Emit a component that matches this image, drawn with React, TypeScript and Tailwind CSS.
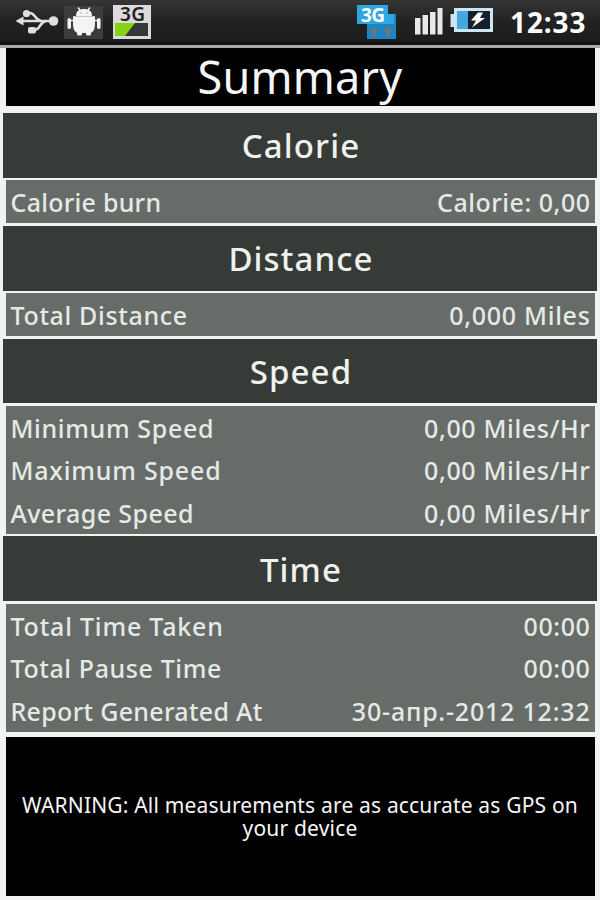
import type { ReactNode } from "react";

type Row = { label: string; value: string; labelClass: string; valueClass: string };
type Section = { title: string; rows: Row[] };

const sections: Section[] = [
  {
    title: "Calorie",
    rows: [
      { label: "Calorie burn", value: "Calorie: 0,00", labelClass: "tracking-[0.25px]", valueClass: "tracking-[0.5px]" },
    ],
  },
  {
    title: "Distance",
    rows: [
      { label: "Total Distance", value: "0,000 Miles", labelClass: "tracking-[0.65px]", valueClass: "tracking-[0.7px]" },
    ],
  },
  {
    title: "Speed",
    rows: [
      { label: "Minimum Speed", value: "0,00 Miles/Hr", labelClass: "tracking-[0.65px]", valueClass: "tracking-[0.65px]" },
      { label: "Maximum Speed", value: "0,00 Miles/Hr", labelClass: "tracking-[0.8px]", valueClass: "tracking-[0.65px]" },
      { label: "Average Speed", value: "0,00 Miles/Hr", labelClass: "tracking-[0.4px]", valueClass: "tracking-[0.65px]" },
    ],
  },
  {
    title: "Time",
    rows: [
      { label: "Total Time Taken", value: "00:00", labelClass: "tracking-[0.8px]", valueClass: "tracking-[0.6px]" },
      { label: "Total Pause Time", value: "00:00", labelClass: "tracking-[0.6px]", valueClass: "tracking-[0.6px]" },
      { label: "Report Generated At", value: "30-апр.-2012 12:32", labelClass: "tracking-[0.3px]", valueClass: "tracking-[0.8px]" },
    ],
  },
];

function StatusIcons() {
  return (
    <svg width="160" height="42" viewBox="0 0 160 42">
      {/* usb */}
      <g fill="none" stroke="#dedede" strokeWidth="2.6">
        <path d="M20 21H54" />
        <path d="M26 13H30C35 13 35 20 41 21" />
        <path d="M32 30C41 31 39 22 46 21" />
      </g>
      <g fill="#dedede">
        <path d="M15.500 21l8-4.500v9z" />
        <circle cx="26.500" cy="13.500" r="3.600" />
        <circle cx="53.500" cy="21" r="4.800" />
        <rect x="28" y="27" width="8" height="6.500" rx="2" />
      </g>
      {/* android */}
      <rect x="64" y="6" width="39" height="33" fill="#3c3c3c" />
      <g fill="#f4f4f4">
        <path d="M76 16c0-5 3-7 8-7s8 2 8 7z" />
        <path d="M73 17h22v5c0 7-1 10-5 11h-12c-4-1-5-4-5-11z" />
        <rect x="67.500" y="18" width="3.500" height="11" rx="1.700" />
        <rect x="97" y="18" width="3.500" height="11" rx="1.700" />
        <rect x="77" y="29" width="5" height="6.500" rx="1.500" />
        <rect x="86" y="29" width="5" height="6.500" rx="1.500" />
      </g>
      <path d="M78 7.500l3 4M90 7.500l-3 4M68 20.500h32" stroke="#f4f4f4" strokeWidth="1.500" />
      <path d="M73 16.500h22" stroke="#c5c5c5" />
      <path d="M80 13h1.500M86.500 13H88" stroke="#bbb" strokeWidth="1.500" />
      {/* 3G monitor */}
      <rect x="113" y="5" width="38" height="34" fill="#dcdade" />
      <rect x="115" y="23" width="33" height="13" fill="#34383a" />
      <path d="M115 23h20l-10 13h-10z" fill="#86d411" />
      <text x="120" y="21" fontSize="19" fontWeight="600" fill="#222" fontFamily="Noto Sans, sans-serif" textLength="25">
        3G
      </text>
    </svg>
  );
}

function SystemIcons() {
  return (
    <svg width="140" height="42" viewBox="355 0 140 42">
      {/* 3G data */}
      <path d="M367 14h29v25h-29z" fill="#1c84c4" />
      <path d="M357 5h31v9h6v10h-37z" fill="#2fa6e0" />
      <text x="361" y="22" fontSize="19" fontWeight="700" fill="#fff" fontFamily="Noto Sans, sans-serif" textLength="24">
        3G
      </text>
      <path d="M369 32l5-6 5 6h-3v5h-4v-5zM383 32l5-6 5 6h-3v5h-4v-5z" fill="#65777f" />
      {/* signal */}
      <g fill="#e8e8e8">
        <rect x="415" y="18" width="5.500" height="16.500" />
        <rect x="422.500" y="15" width="5.500" height="19.500" />
        <rect x="430" y="12" width="5.500" height="22.500" />
        <rect x="437.500" y="8" width="5" height="26.500" />
      </g>
      {/* battery */}
      <path d="M454 8h39v24h-39v-5h-3.500V14h3.500z" fill="#cfe6f2" />
      <rect x="457" y="11" width="11" height="18" fill="#43a9dc" />
      <rect x="468" y="11" width="22" height="18" fill="#14212c" />
      <path d="M478 12.500l-7 8h5l-4 7 13-9.500h-5l3-5.500z" fill="#fff" />
    </svg>
  );
}

function Box({ className, children }: { className: string; children: ReactNode }) {
  return <div className={`mx-[5.5px] flex justify-center bg-black text-[#f6f6f6] ${className}`}>{children}</div>;
}

export default function App() {
  return (
    <div className="h-[900px] w-[600px] overflow-hidden bg-[#f1f3f1] font-['Noto_Sans',sans-serif]">
      <div className="flex h-[45px] items-start border-b-[3px] border-[#121212] bg-linear-to-b from-[#353535] via-[#222222] to-[#1c1c1c]">
        <StatusIcons />
        <div className="ml-auto flex pr-3">
          <SystemIcons />
          <span className="ml-[15px] w-[78px] text-[28px] leading-[44px] font-bold tracking-[0.9px] whitespace-nowrap text-white">
            12:33
          </span>
        </div>
      </div>
      <div className="h-[3px] bg-[#a9a9a9]" />
      <Box className="h-[58px] items-center pb-[2px]">
        <h1 className="text-[45px] leading-none tracking-[0.2px]">Summary</h1>
      </Box>
      <div className="mt-[7px] flex flex-col gap-[2.7px]">
        {sections.map(({ title, rows }) => (
          <section key={title} className="flex flex-col gap-[2.7px]">
            <h2 className="mx-[3px] flex h-[64.8px] items-center justify-center bg-[#373b37] pt-px pl-[2px] text-[33px] font-medium tracking-[1.1px] text-[#eef2ee]">
              {title}
            </h2>
            <div className="mx-[5.5px] bg-[#686c68] pr-[4px] pl-[5px]">
              {rows.map((row) => (
                <div
                  key={row.label}
                  className="flex h-[42.6px] items-center justify-between pt-[2px] text-[25px] font-medium text-[#e4eae6]"
                >
                  <span className={row.labelClass}>{row.label}</span>
                  <span className={row.valueClass}>{row.value}</span>
                </div>
              ))}
            </div>
          </section>
        ))}
      </div>
      <Box className="mt-[5px] h-[159px] items-center pt-px text-center">
        <p className="text-[21px] leading-[23px] tracking-[0.18px]">
          WARNING: All measurements are as accurate as GPS on
          <br />
          your device
        </p>
      </Box>
    </div>
  );
}
